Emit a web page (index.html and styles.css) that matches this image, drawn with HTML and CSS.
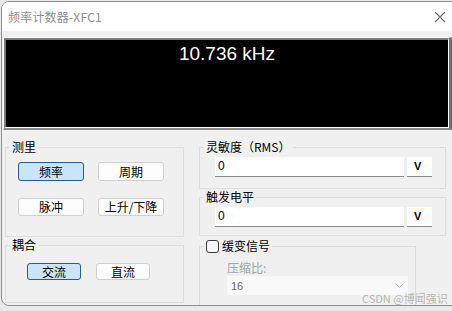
FILE: index.html
```html
<!DOCTYPE html>
<html lang="zh">
<head>
<meta charset="utf-8">
<title>频率计数器-XFC1</title>
<link rel="stylesheet" href="styles.css">
</head>
<body>
<div class="window">
  <div class="titlebar">
    <span class="title">频率计数器-XFC1</span>
    <svg class="close" width="12" height="12" viewBox="0 0 12 12"><path d="M1 1 L11 11 M11 1 L1 11" stroke="#6b6b6b" stroke-width="1.1" fill="none"/></svg>
  </div>
  <div class="client">
    <div class="display"><div class="screen"><span class="reading">10.736 kHz</span></div></div>
    <div class="panels">
      <div class="col">
        <fieldset class="grp grp-measure">
          <legend>测里</legend>
          <div class="btn-grid">
            <div class="btn sel">频率</div>
            <div class="btn">周期</div>
            <div class="btn">脉冲</div>
            <div class="btn">上升/下降</div>
          </div>
        </fieldset>
        <fieldset class="grp grp-coupling">
          <legend>耦合</legend>
          <div class="btn-row">
            <div class="btn small sel">交流</div>
            <div class="btn small">直流</div>
          </div>
        </fieldset>
      </div>
      <div class="col">
        <fieldset class="grp grp-field">
          <legend>灵敏度（RMS）</legend>
          <div class="field"><div class="input">0</div><div class="unit">V</div></div>
        </fieldset>
        <fieldset class="grp grp-field grp-trig">
          <legend>触发电平</legend>
          <div class="field"><div class="input">0</div><div class="unit">V</div></div>
        </fieldset>
        <fieldset class="grp grp-slow">
          <legend><span class="check"></span><span>缓变信号</span></legend>
          <div class="slow-body">
            <div class="dis-label">压缩比:</div>
            <div class="select"><span>16</span>
              <svg width="9" height="5" viewBox="0 0 9 5"><path d="M0.5 0.5 L4.5 4.5 L8.5 0.5" stroke="#b4b4b4" fill="none"/></svg>
            </div>
          </div>
        </fieldset>
      </div>
    </div>
  </div>
</div>
<div class="watermark">CSDN @博闻强识</div>
</body>
</html>
```
FILE: styles.css
```css
html, body {
  margin: 0;
  padding: 0;
  width: 452px;
  height: 311px;
  overflow: hidden;
  background: #e9e9e9;
  font-family: "Noto Sans CJK SC", "Liberation Sans", sans-serif;
  font-size: 12px;
  color: #000;
}
body {
  position: relative;
}
.window {
  margin: 1px 0 0 1px;
  width: 470px;
  height: 305px;
  border: 1px solid #8f8f8f;
  border-radius: 8px;
  overflow: hidden;
  background: #f0f0f0;
  box-sizing: border-box;
}
.titlebar {
  height: 29px;
  background: #fff;
  display: flex;
  align-items: center;
  padding-left: 6px;
  position: relative;
}
.title {
  color: #8e8e8e;
  font-size: 12px;
  line-height: 16px;
  letter-spacing: 0.2px;
}
.close {
  position: absolute;
  left: 432px;
  top: 9px;
}
.client {
  padding-top: 6px;
}
.display {
  margin-left: 1px;
  width: 449px;
  height: 93px;
  box-sizing: border-box;
  border-top: 1px solid #fff;
  border-left: 1px solid #fff;
  border-right: 3px solid #6d6d6d;
  border-bottom: 2px solid #8a8a8a;
}
.screen {
  height: 100%;
  box-sizing: border-box;
  border-top: 2px solid #7c7c7c;
  border-left: 2px solid #7c7c7c;
  border-right: 1px solid #fff;
  border-bottom: 1px solid #fff;
  background: #000;
  display: flex;
  justify-content: center;
  padding-top: 2px;
}
.reading {
  color: #fff;
  font-family: "Liberation Sans", Arial, sans-serif;
  font-size: 19px;
  line-height: 24px;
}
.panels {
  display: grid;
  grid-template-columns: 179px 247px;
  column-gap: 15px;
  padding-left: 3px;
  margin-top: 9px;
}
.col {
  display: flex;
  flex-direction: column;
}
.grp {
  margin: 0;
  padding: 0;
  border: 1px solid #dcdcdc;
  min-width: 0;
}
.grp legend {
  margin-left: 4px;
  padding: 0 2px;
  line-height: 16px;
  font-size: 12px;
}
.btn-grid {
  display: grid;
  grid-template-columns: 66px 66px;
  column-gap: 14px;
  row-gap: 17px;
  padding: 7px 0 20px 12px;
}
.btn {
  height: 19px;
  box-sizing: border-box;
  background: #fdfdfd;
  border: 1px solid #d0d0d0;
  border-radius: 3px;
  display: flex;
  align-items: center;
  justify-content: center;
  line-height: 16px;
}
.btn.sel {
  background: #cce4f7;
  border-color: #1e5d9e;
}
.btn-grid .btn:nth-child(n+3) {
  height: 18px;
}
.btn-row {
  display: flex;
  gap: 15px;
  padding: 10px 0 22px 21px;
}
.btn.small {
  width: 54px;
  height: 17px;
}
.field {
  display: flex;
  gap: 3px;
  padding: 2px 0 11px 15px;
}
.grp-trig .field {
  padding-bottom: 8px;
}
.input {
  width: 189px;
  height: 20px;
  box-sizing: border-box;
  background: #fff;
  border-bottom: 1px solid #8a8a8a;
  padding-left: 3px;
  line-height: 19px;
  font-family: "Liberation Sans", Arial, sans-serif;
  font-size: 12px;
}
.unit {
  width: 25px;
  height: 20px;
  box-sizing: border-box;
  background: #fff;
  border-bottom: 1px solid #8a8a8a;
  padding-left: 7px;
  line-height: 19px;
  font-family: "Liberation Sans", Arial, sans-serif;
  font-size: 11px;
  font-weight: bold;
}
.grp-slow {
  margin-top: 6px;
  width: 217px;
  box-sizing: border-box;
  height: 80px;
}
.grp-slow legend {
  margin-left: 4px;
  padding: 0 2px;
  line-height: 8px;
  height: 8px;
  display: flex;
  align-items: center;
  gap: 3px;
}
.check {
  width: 13px;
  height: 13px;
  box-sizing: border-box;
  border: 1px solid #3c3c3c;
  border-radius: 3px;
  background: #f7f7f7;
  flex: none;
}
.grp-slow legend span:last-child {
  line-height: 16px;
}
.slow-body {
  padding: 11px 0 0 27px;
}
.dis-label {
  color: #a3a3a3;
  line-height: 14px;
}
.select {
  margin-top: 1px;
  width: 181px;
  height: 19px;
  box-sizing: border-box;
  background: #f9f9f9;
  display: flex;
  align-items: center;
  justify-content: space-between;
  padding: 0 4px;
  color: #6e6e6e;
  font-family: "Liberation Sans", Arial, sans-serif;
  font-size: 11px;
}
.watermark {
  position: absolute;
  left: 362px;
  top: 292px;
  color: rgba(140, 140, 140, 0.6);
  font-size: 11px;
  line-height: 13px;
  white-space: nowrap;
}
```
